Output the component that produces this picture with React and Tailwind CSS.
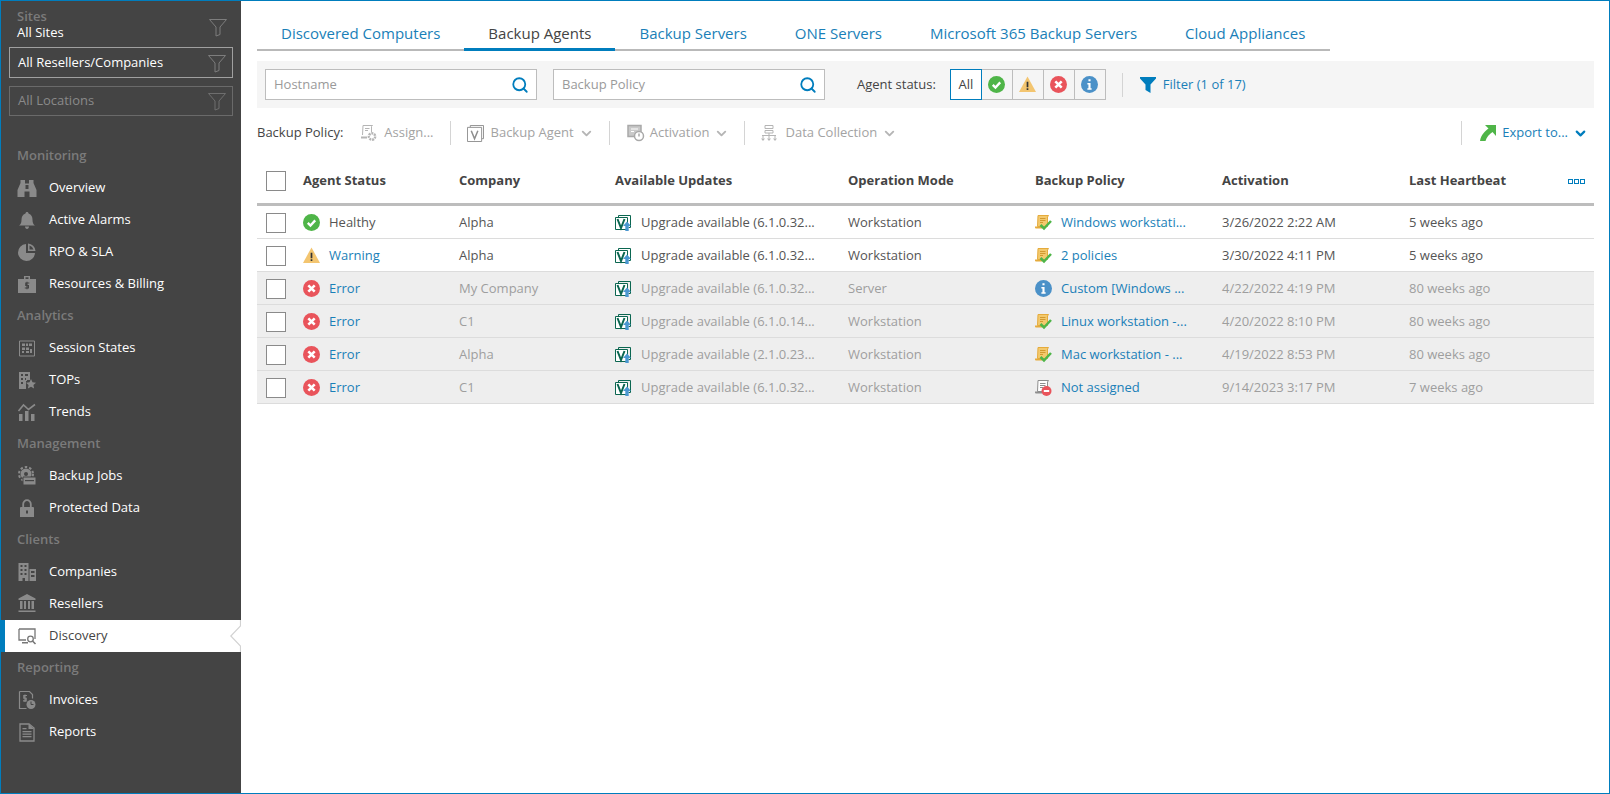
import { Search, ChevronDown } from "lucide-react";

const FONT = "font-['Open_Sans',sans-serif]";

function Funnel({ className = "" }) {
  return (
    <svg width="20" height="20" viewBox="0 0 20 20" fill="none" stroke="currentColor" strokeWidth="1" className={className}>
      <path d="M1.500 2.500h17l-6.500 7.500v7.500l-4 1.500v-9z" />
    </svg>
  );
}

const navIcons = {
  overview: (
    <>
      <path d="M3.500 2h4.500v3.500h4V2h4.500v3l3 7v7h-7v-5.500H7.500V19h-7v-7l3-7z" />
      <path d="M8.500 7h3v4h-3z" fill="#444" />
    </>
  ),
  alarms: (
    <>
      <path d="M10 2c1 0 1.500.700 1.500 1.500 3 1 4 3.500 4 6.500 0 3 1 4.500 2.500 5.500H2c1.500-1 2.500-2.500 2.500-5.500 0-3 1-5.500 4-6.500C8.500 2.700 9 2 10 2z" />
      <path d="M8 16.500h4c0 1.500-1 2.500-2 2.500s-2-1-2-2.500z" />
    </>
  ),
  rpo: (
    <>
      <path d="M9 2v9h9a8.500 8.500 0 1 1-9-9z" />
      <path d="M11 1.500a8 8 0 0 1 7.500 7.500H11zM12.500 3.500V7.500h4a6 6 0 0 0-4-4z" fillRule="evenodd" />
    </>
  ),
  billing: (
    <>
      <path d="M7 2h6v3h6v14H1V5h6zM8.500 3.300V5h3V3.300z" fillRule="evenodd" />
      <path d="M12.300 9H8.800v2.500h2.600V14H7.800M10 7.800V15.300" fill="none" stroke="#444" strokeWidth="1.200" />
    </>
  ),
  session: (
    <>
      <path d="M2.500 3h15v15h-15z" fill="none" stroke="currentColor" />
      <path d="M5 5.500h3v2.500H5zM9 5.500h2v2.500H9zM12 5.500h3v2.500h-3zM5 9.500h3V12H5zM9 9.500h3V12H9zM5 13h2v2H5zM9 13h3v2H9zM13 11h2v4h-2z" />
    </>
  ),
  tops: (
    <>
      <path d="M2 2h11v8h-3v1h-1v8H2zM4 4v2h2V4zM8 4v2h3V4zM4 8v2h2V8zM8 8v2h1V8zM4 12v2h2v-2z" fillRule="evenodd" />
      <path d="M14 9l1.500 3.300 3.500.400-2.600 2.400.700 3.500-3.100-1.800-3.100 1.800.700-3.500L9 12.700l3.500-.400z" />
    </>
  ),
  trends: (
    <>
      <path d="M2 12h3.500v7H2zM8 9h3.500v10H8zM14 12h3.500v7H14z" />
      <path d="M1.500 9l5-6 5 4.500 6.500-5" fill="none" stroke="currentColor" strokeWidth="1.600" />
    </>
  ),
  jobs: (
    <>
      <circle cx="9" cy="8" r="5.500" />
      <circle cx="9" cy="8" r="7" fill="none" stroke="currentColor" strokeWidth="2" strokeDasharray="2.500 2" />
      <circle cx="9" cy="8" r="2" fill="#444" />
      <path d="M6 11h13v8H6z" stroke="#444" />
      <path d="M8 14h9v1.200H8z" fill="#444" />
    </>
  ),
  lock: (
    <>
      <path d="M4 9h12a1 1 0 0 1 1 1v9H3v-9a1 1 0 0 1 1-1zM9 12.500v3h2v-3z" fillRule="evenodd" />
      <path d="M6.200 9.500V6a3.800 3.800 0 0 1 7.600 0v3.500" fill="none" stroke="currentColor" strokeWidth="1.800" />
    </>
  ),
  companies: (
    <>
      <path d="M1.500 1h10v18H8v-3H5.500v3h-4zM3.500 3v2h2V3zM7.500 3v2h2V3zM3.500 7v2h2V7zM7.500 7v2h2V7zM3.500 11v2h2v-2zM7.500 11v2h2v-2z" fillRule="evenodd" />
      <path d="M12.500 7H19v12h-6.500zM14 9v2h3.500V9zM14 13v2h3.500v-2z" fillRule="evenodd" />
    </>
  ),
  resellers: (
    <>
      <path d="M10 0l8.500 4.500V6h-17V4.500zM3 7h2.500v8H3zM7 7h2v8H7zM11 7h2v8h-2zM14.500 7H17v8h-2.500zM1.500 16.500h17V18h-17z" />
    </>
  ),
  discovery: (
    <>
      <path d="M2 3h16v10" fill="none" stroke="currentColor" strokeWidth="1.300" />
      <path d="M2 3v11h7" fill="none" stroke="currentColor" strokeWidth="1.300" />
      <path d="M5 16h6v1.500H5z" />
      <circle cx="13.500" cy="13" r="2.800" fill="none" stroke="currentColor" strokeWidth="1.300" />
      <path d="M15.500 15l3 3" stroke="currentColor" strokeWidth="1.600" />
    </>
  ),
  invoices: (
    <>
      <path d="M2.500 1.500h10l3 3v4M2.500 1.500v17h7" fill="none" stroke="currentColor" strokeWidth="1.200" />
      <path d="M10 5.500H6.800v2.700h2.400v2.700H6M8 4.500V12" fill="none" stroke="currentColor" strokeWidth="1.100" />
      <circle cx="14" cy="14.500" r="4.500" />
      <path d="M14 11.500v3h2.500" fill="none" stroke="#444" />
    </>
  ),
  reports: (
    <>
      <path d="M3 2h9l5 4v13H3z" fill="none" stroke="currentColor" strokeWidth="1.300" />
      <path d="M11.500 2v5H17z" />
      <path d="M5.500 6h4v1.300h-4zM5.500 9h9v1.300h-9zM5.500 11.500h9v1.300h-9zM5.500 14h9v1.300h-9z" />
    </>
  ),
};

function NavIcon({ name }) {
  return (
    <svg width="20" height="20" viewBox="0 0 20 20" fill="currentColor" className="shrink-0">
      {navIcons[name]}
    </svg>
  );
}

function NavItem({ icon, label, active }) {
  if (active) {
    return (
      <div className="relative h-8 flex items-center bg-white border-l-4 border-[#007dbd] pl-[12px] text-[#444] text-[13px]">
        <span className="text-[#777] flex">
          <NavIcon name={icon} />
        </span>
        <span className="ml-[12px]">{label}</span>
        <svg width="11" height="32" viewBox="0 0 11 32" fill="none" stroke="#d2d2d2" strokeWidth="1.200" className="absolute right-0 top-0">
          <path d="M10.500 0v6L.800 16l9.700 10v6" />
        </svg>
      </div>
    );
  }
  return (
    <div className="h-8 flex items-center pl-4 text-white text-[13px]">
      <span className="text-[#8a8a8a] flex">
        <NavIcon name={icon} />
      </span>
      <span className="ml-[12px]">{label}</span>
    </div>
  );
}

function NavHeader({ children }) {
  return <div className="h-8 flex items-center pl-4 text-[13px] font-semibold text-[#7b7b7b]">{children}</div>;
}

function Healthy({ size = 17 }) {
  return (
    <svg width={size} height={size} viewBox="0 0 16 16" className="shrink-0">
      <circle cx="8" cy="8" r="8" fill="#4fb548" />
      <path d="M4.500 8.300l2.500 2.500 4.500-4.800" fill="none" stroke="#fff" strokeWidth="2.200" />
    </svg>
  );
}

function Warning({ size = 17 }) {
  return (
    <svg width={size} height={size} viewBox="0 0 16 16" className="shrink-0">
      <path d="M8 .500L16 15H0z" fill="#f3c570" />
      <path d="M7.200 5.500h1.600v5H7.200zM7.200 11.500h1.600v1.700H7.200z" fill="#333" />
    </svg>
  );
}

function ErrorIcon({ size = 17 }) {
  return (
    <svg width={size} height={size} viewBox="0 0 16 16" className="shrink-0">
      <circle cx="8" cy="8" r="8" fill="#e9545b" />
      <path d="M5 5l6 6M11 5l-6 6" stroke="#fff" strokeWidth="2.400" />
    </svg>
  );
}

function Info({ size = 17 }) {
  return (
    <svg width={size} height={size} viewBox="0 0 16 16" className="shrink-0">
      <circle cx="8" cy="8" r="8" fill="#4b91c8" />
      <path d="M7 3h2v2H7zM6 6.500h3V11.500h1V13H6v-1.500h1V8H6z" fill="#fff" />
    </svg>
  );
}

function VeeamUpdate() {
  return (
    <svg width="16" height="16" viewBox="0 0 16 16" fill="none" className="shrink-0">
      <path d="M3.500 2.500V.500h12v12h-2" stroke="#0b6650" />
      <path d="M.500 2.500h12v12H.500z" stroke="#0b6650" fill="#fff" />
      <path d="M2.500 4l3.500 9 3.500-9" stroke="#0b6650" strokeWidth="2" />
      <path d="M12 6.500l4 4.500h-2.300v5h-3.400v-5H8z" fill="#4b97d0" />
    </svg>
  );
}

function Scroll({ gray }) {
  const c = gray ? "#8e8e8e" : "#e5ab3c";
  return (
    <svg width="17" height="16" viewBox="0 0 17 16" className="shrink-0">
      <path d="M3 .500h10.500l-1 1.500v9.500H2.500z" fill={gray ? "#fff" : "#f3c96d"} stroke={c} />
      <path d="M5 3.500h5.500M5 5.500h5.500M5 7.500h3" stroke={gray ? "#8e8e8e" : "#d29a30"} />
      <path d="M0 11.500h7v2H1a1 1 0 0 1-1-1z" fill={c} />
      {gray ? (
        <>
          <circle cx="11.500" cy="11" r="5" fill="#e9545b" />
          <path d="M8.800 10h5.400v2H8.800z" fill="#fff" />
        </>
      ) : (
        <path d="M5.500 10l3.500 3.500 7-7.500" fill="none" stroke="#4fb548" strokeWidth="2.500" />
      )}
    </svg>
  );
}

function SearchInput({ placeholder }) {
  return (
    <div className="w-[272px] h-[31px] pt-[1px] bg-white border border-[#bdbdbd] flex items-center justify-between pl-[8px] pr-[7px]">
      <span className="text-[13px] text-[#9a9a9a]">{placeholder}</span>
      <Search size={18} strokeWidth={2.400} className="text-[#007dbd]" />
    </div>
  );
}

function Divider({ className = "" }) {
  return <div className={`w-px h-6 bg-[#d4d4d4] ${className}`} />;
}

const ToolIcons = {
  assign: (
    <svg width="17" height="18" viewBox="0 0 17 18" fill="none" stroke="#b5b5b5" className="shrink-0">
      <path d="M3 1.500h9.500l-1 1V8M3 1.500L2.500 11" />
      <path d="M5 4.500h4.500M5 6.500h3" />
      <path d="M1 13.500h6" strokeWidth="2" />
      <circle cx="12" cy="12.500" r="3.200" strokeWidth="2.400" strokeDasharray="2 .8" />
    </svg>
  ),
  agent: (
    <svg width="17" height="17" viewBox="0 0 18 18" fill="none" stroke="#8e8e8e" className="shrink-0">
      <path d="M3.500 2.500V.500h14v14h-2" />
      <path d="M.500 2.500h15v15H.500z" fill="#fff" />
      <path d="M4.500 6l3.500 8.500L11.500 6" strokeWidth="1.600" />
    </svg>
  ),
  activation: (
    <svg width="18" height="18" viewBox="0 0 18 18" fill="none" className="shrink-0">
      <path d="M1 1.500h13v11H1z" fill="#c9c9c9" stroke="#a9a9a9" strokeWidth="1.500" />
      <path d="M4 5h7M4 7.500h3" stroke="#fff" />
      <circle cx="12" cy="12" r="4.500" fill="#fff" stroke="#a9a9a9" strokeWidth="1.500" />
      <path d="M12 9.500v3" stroke="#a9a9a9" strokeWidth="1.500" />
    </svg>
  ),
  data: (
    <svg width="18" height="18" viewBox="0 0 18 18" fill="none" stroke="#b5b5b5" className="shrink-0">
      <path d="M5 1.500h8v3H5zM5 6.500h8v2.500H5zM9 9v2M2 11.500h14M3 11.500v3M9 11.500v3M15 11.500v3" />
      <path d="M1 14.500h4l-2 2.500zM7 14.500h4l-2 2.500zM13 14.500h4l-2 2.500z" fill="#b5b5b5" stroke="none" />
    </svg>
  ),
};

function ToolButton({ icon, label, ml, textGap = "ml-[6px]" }) {
  return (
    <div className={`flex items-center text-[13px] text-[#a3a3a3] ${ml}`}>
      {icon}
      <span className={textGap}>{label}</span>
      <ChevronDown size={15} strokeWidth={3} className="ml-[5px] text-[#b5b5b5]" />
    </div>
  );
}

const tabs = ["Discovered Computers", "Backup Agents", "Backup Servers", "ONE Servers", "Microsoft 365 Backup Servers", "Cloud Appliances"];

const rows = [
  { status: "Healthy", Icon: Healthy, company: "Alpha", update: "Upgrade available (6.1.0.32...", mode: "Workstation", policy: "Windows workstati...", activation: "3/26/2022 2:22 AM", beat: "5 weeks ago" },
  { status: "Warning", Icon: Warning, link: true, company: "Alpha", update: "Upgrade available (6.1.0.32...", mode: "Workstation", policy: "2 policies", activation: "3/30/2022 4:11 PM", beat: "5 weeks ago" },
  { status: "Error", Icon: ErrorIcon, link: true, off: true, company: "My Company", update: "Upgrade available (6.1.0.32...", mode: "Server", policy: "Custom [Windows ...", policyIcon: "info", activation: "4/22/2022 4:19 PM", beat: "80 weeks ago" },
  { status: "Error", Icon: ErrorIcon, link: true, off: true, company: "C1", update: "Upgrade available (6.1.0.14...", mode: "Workstation", policy: "Linux workstation -...", activation: "4/20/2022 8:10 PM", beat: "80 weeks ago" },
  { status: "Error", Icon: ErrorIcon, link: true, off: true, company: "Alpha", update: "Upgrade available (2.1.0.23...", mode: "Workstation", policy: "Mac workstation - ...", activation: "4/19/2022 8:53 PM", beat: "80 weeks ago" },
  { status: "Error", Icon: ErrorIcon, link: true, off: true, company: "C1", update: "Upgrade available (6.1.0.32...", mode: "Workstation", policy: "Not assigned", policyIcon: "none", activation: "9/14/2023 3:17 PM", beat: "7 weeks ago" },
];

const COLS = "grid grid-cols-[46px_156px_156px_233px_187px_187px_187px_1fr] items-center";

function Checkbox() {
  return <div className="w-5 h-5 bg-white border border-[#8a8a8a] ml-[9px]" />;
}

export default function App() {
  return (
    <div className={`w-[1610px] h-[794px] border border-[#007dbd] flex bg-white overflow-hidden ${FONT}`}>
      {/* sidebar */}
      <aside className="w-[240px] shrink-0 bg-[#444444] flex flex-col">
        <div className="relative h-[46px] pl-4 pt-[7px]">
          <div className="text-[13px] leading-[16px] font-semibold text-[#7b7b7b]">Sites</div>
          <div className="text-[13px] leading-[16px] text-white">All Sites</div>
          <Funnel className="absolute right-[13px] top-[16px] text-[#7d7d7d]" />
        </div>
        <div className="mx-2 h-[31px] border border-[#a0a0a0] flex items-center justify-between pl-2 pr-[5px] text-[13px] text-white">
          All Resellers/Companies
          <Funnel className="text-[#7d7d7d]" />
        </div>
        <div className="mx-2 mt-[8px] h-[30px] border border-[#6a6a6a] flex items-center justify-between pl-2 pr-[5px] text-[13px] text-[#8a8a8a]">
          All Locations
          <Funnel className="text-[#6e6e6e]" />
        </div>
        <div className="mt-[24px]">
          <NavHeader>Monitoring</NavHeader>
          <NavItem icon="overview" label="Overview" />
          <NavItem icon="alarms" label="Active Alarms" />
          <NavItem icon="rpo" label="RPO & SLA" />
          <NavItem icon="billing" label="Resources & Billing" />
          <NavHeader>Analytics</NavHeader>
          <NavItem icon="session" label="Session States" />
          <NavItem icon="tops" label="TOPs" />
          <NavItem icon="trends" label="Trends" />
          <NavHeader>Management</NavHeader>
          <NavItem icon="jobs" label="Backup Jobs" />
          <NavItem icon="lock" label="Protected Data" />
          <NavHeader>Clients</NavHeader>
          <NavItem icon="companies" label="Companies" />
          <NavItem icon="resellers" label="Resellers" />
          <NavItem icon="discovery" label="Discovery" active />
          <NavHeader>Reporting</NavHeader>
          <NavItem icon="invoices" label="Invoices" />
          <NavItem icon="reports" label="Reports" />
        </div>
      </aside>

      {/* content */}
      <main className="flex-1 min-w-0 pl-4 pr-[15px]">
        <div className="w-[1073px] h-[50px] pt-[15px] flex border-b-2 border-[#b9b9b9]">
          {tabs.map((t, i) => (
            <div
              key={t}
              className={`relative px-6 text-[15px] leading-[35px] ${i === 1 ? "text-[#444]" : "text-[#1a7fb8]"}`}
            >
              {t}
              {i === 1 && <div className="absolute left-0 right-0 -bottom-[2px] h-[3px] bg-[#007dbd]" />}
            </div>
          ))}
        </div>

        <div className="mt-[10px] h-[47px] bg-[#f5f5f5] flex items-center pl-2">
          <SearchInput placeholder="Hostname" />
          <div className="ml-[16px]">
            <SearchInput placeholder="Backup Policy" />
          </div>
          <span className="ml-[32px] mt-[1px] text-[13px] text-[#444]">Agent status:</span>
          <div className="ml-[14px] flex h-[31px]">
            <div className="w-[32px] bg-white border border-[#007dbd] flex items-center justify-center text-[13px] text-[#444]">All</div>
            <div className="w-[31px] border border-l-0 border-[#bdbdbd] flex items-center justify-center"><Healthy /></div>
            <div className="w-[31px] border border-l-0 border-[#bdbdbd] flex items-center justify-center"><Warning /></div>
            <div className="w-[31px] border border-l-0 border-[#bdbdbd] flex items-center justify-center"><ErrorIcon /></div>
            <div className="w-[31px] border border-l-0 border-[#bdbdbd] flex items-center justify-center"><Info /></div>
          </div>
          <Divider className="ml-[16px]" />
          <svg width="16" height="18" viewBox="0 0 16 18" fill="#007dbd" className="ml-[17px]">
            <path d="M0 1h16v1.500l-5.500 6V17l-5-3V8.500L0 2.500z" />
          </svg>
          <span className="ml-[7px] mt-[1px] text-[13px] text-[#1a7fb8]">Filter (1 of 17)</span>
        </div>

        <div className="h-[50px] flex items-center text-[13px]">
          <span className="text-[#444]">Backup Policy:</span>
          <div className="ml-[17px] flex items-center text-[#a3a3a3]">
            {ToolIcons.assign}
            <span className="ml-[7px]">Assign...</span>
          </div>
          <Divider className="ml-[16px]" />
          <ToolButton icon={ToolIcons.agent} label="Backup Agent" ml="ml-[16px]" textGap="ml-[7px]" />
          <Divider className="ml-[15px]" />
          <ToolButton icon={ToolIcons.activation} label="Activation" ml="ml-[17px]" textGap="ml-[5px]" />
          <Divider className="ml-[15px]" />
          <ToolButton icon={ToolIcons.data} label="Data Collection" ml="ml-[15px]" textGap="ml-[7px]" />
          <Divider className="ml-auto" />
          <svg width="16" height="18" viewBox="0 0 16 18" fill="#4fb548" className="ml-[18px]">
            <path d="M5 1h11v11l-3.500-4C9.500 10 6.500 13 5.500 17H0C1 11 5 7 8.500 4.500z" />
          </svg>
          <span className="ml-[6px] text-[#1a7fb8]">Export to...</span>
          <ChevronDown size={15} strokeWidth={3.500} className="ml-[5px] mr-[6px] text-[#007dbd]" />
        </div>

        <div className={`${COLS} h-[48px] border-b-[3px] border-[#bdbdbd] text-[13px] font-bold text-[#444] relative`}>
          <Checkbox />
          <span>Agent Status</span>
          <span>Company</span>
          <span>Available Updates</span>
          <span>Operation Mode</span>
          <span>Backup Policy</span>
          <span>Activation</span>
          <span>Last Heartbeat</span>
          <div className="absolute right-[9px] top-[21px] flex gap-[1px]">
            <div className="w-[5px] h-[5px] border border-[#007dbd]" />
            <div className="w-[5px] h-[5px] border border-[#007dbd]" />
            <div className="w-[5px] h-[5px] border border-[#007dbd]" />
          </div>
        </div>

        {rows.map((r, i) => {
          const muted = r.off ? "text-[#9e9e9e]" : "text-[#555]";
          return (
            <div key={i} className={`${COLS} h-[33px] pt-[1px] border-b border-[#dcdcdc] text-[13px] ${r.off ? "bg-[#eeeeee]" : "bg-white"}`}>
              <Checkbox />
              <div className="flex items-center gap-[9px]">
                <r.Icon />
                <span className={r.link ? "text-[#1a7fb8]" : "text-[#555]"}>{r.status}</span>
              </div>
              <span className={muted}>{r.company}</span>
              <div className="flex items-center gap-[10px]">
                <VeeamUpdate />
                <span className={muted}>{r.update}</span>
              </div>
              <span className={muted}>{r.mode}</span>
              <div className="flex items-center gap-[9px]">
                {r.policyIcon === "info" ? <Info /> : <Scroll gray={r.policyIcon === "none"} />}
                <span className="text-[#1a7fb8]">{r.policy}</span>
              </div>
              <span className={muted}>{r.activation}</span>
              <span className={muted}>{r.beat}</span>
            </div>
          );
        })}
      </main>
    </div>
  );
}
